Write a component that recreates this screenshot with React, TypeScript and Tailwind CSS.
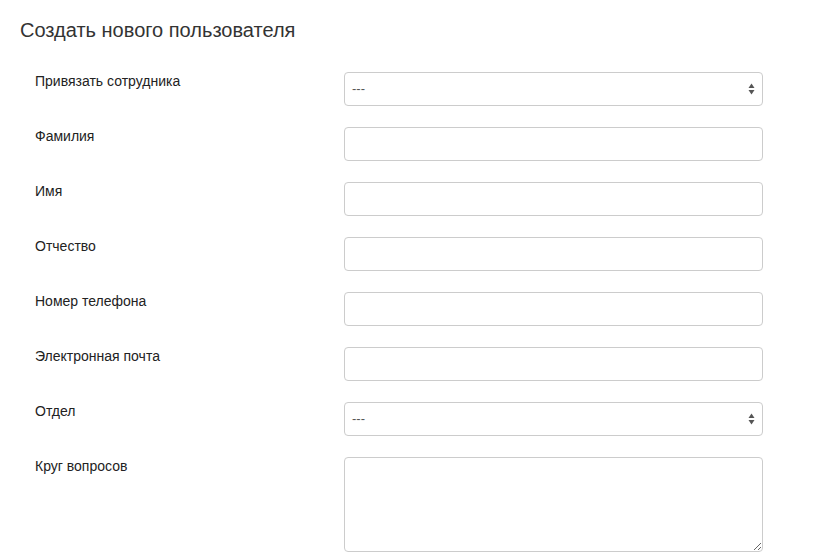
import React from 'react';

const fields: { label: string; type: 'select' | 'input' | 'textarea' }[] = [
  { label: 'Привязать сотрудника', type: 'select' },
  { label: 'Фамилия', type: 'input' },
  { label: 'Имя', type: 'input' },
  { label: 'Отчество', type: 'input' },
  { label: 'Номер телефона', type: 'input' },
  { label: 'Электронная почта', type: 'input' },
  { label: 'Отдел', type: 'select' },
  { label: 'Круг вопросов', type: 'textarea' },
];

const Arrows = () => (
  <svg className="absolute right-[7px] top-1/2 -translate-y-1/2" width="7" height="12" viewBox="0 0 7 12">
    <path d="M3.5 0.5 L6.5 5 L0.5 5 Z" fill="#555" />
    <path d="M3.5 11.5 L6.5 7 L0.5 7 Z" fill="#555" />
  </svg>
);

const App = () => {
  return (
    <div className="w-[827px] h-[560px] overflow-hidden bg-white px-5 pt-[19px] font-['Liberation_Sans',Arial,sans-serif]">
      <h1 className="text-[20px] leading-[22px] text-[#333] font-normal mb-[31px]">
        Создать нового пользователя
      </h1>

      <form className="pl-[15px]">
        {fields.map((f) => (
          <div key={f.label} className="flex items-start mb-[21px]">
            <label className="w-[309px] shrink-0 pt-[1px] text-[14px] leading-[17px] text-[#222]">
              {f.label}
            </label>

            {f.type === 'select' && (
              <div className="relative w-[419px] h-[34px] rounded-[4px] border border-[#ccc] bg-white">
                <div className="px-[7px] text-[13px] leading-[32px] text-[#555]">---</div>
                <Arrows />
              </div>
            )}

            {f.type === 'input' && (
              <input
                type="text"
                className="w-[419px] h-[34px] rounded-[4px] border border-[#ccc] bg-white px-3 text-[13px] text-[#555] outline-none"
              />
            )}

            {f.type === 'textarea' && (
              <textarea className="w-[419px] h-[95px] rounded-[4px] border border-[#ccc] bg-white px-3 py-2 text-[13px] text-[#555] outline-none" />
            )}
          </div>
        ))}
      </form>
    </div>
  );
};

export default App;
